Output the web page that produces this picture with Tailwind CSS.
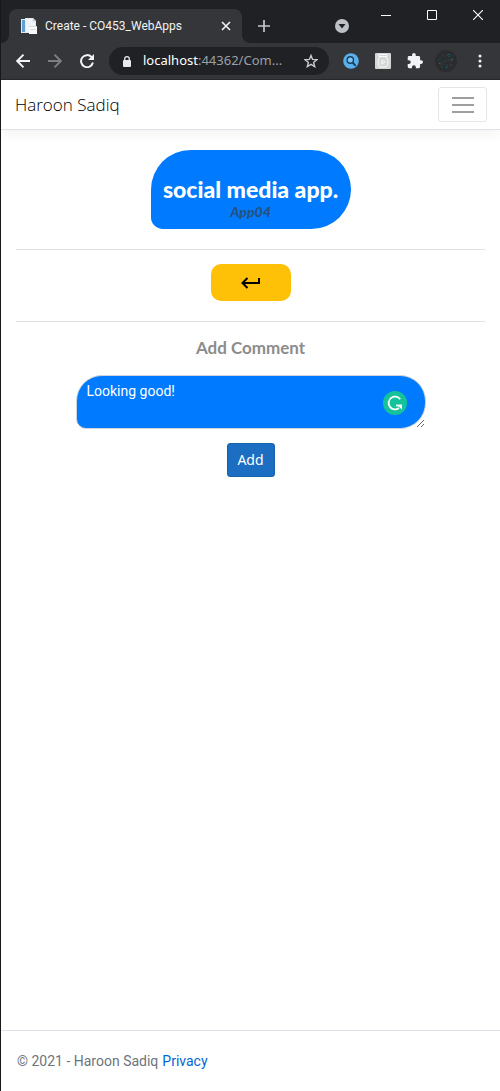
<!DOCTYPE html>
<html lang="en">
<head>
<meta charset="utf-8">
<meta name="viewport" content="width=device-width, initial-scale=1">
<title>Create - CO453_WebApps</title>
<script src="https://cdn.jsdelivr.net/npm/@tailwindcss/browser@4"></script>
</head>
<body class="flex min-h-screen flex-col border-l border-[#17181a] bg-white font-['Open_Sans','Noto_Sans',sans-serif] text-[#212529]">
<div class="bg-[#202124]">
  <div class="flex h-[43px] items-start">
    <div class="relative ml-2 mt-[9px] flex h-[34px] w-[233px] items-center rounded-t-lg bg-[#35363a] pl-3 pr-[11px]">
      <svg class="absolute -left-2 bottom-0 size-2" viewBox="0 0 8 8"><path fill="#35363a" d="M8 0v8H0a8 8 0 0 0 8-8Z"/></svg>
      <svg class="absolute -right-2 bottom-0 size-2" viewBox="0 0 8 8"><path fill="#35363a" d="M0 0v8h8a8 8 0 0 1-8-8Z"/></svg>
      <svg class="size-4 shrink-0" viewBox="0 0 16 16">
        <path fill="#dfe9f2" d="M0 1h9v14H0z"/><path fill="#5f9fd4" d="M1 2h3v12H1z"/>
        <path fill="#e4e8ed" d="M4 0h8l3 3v12H4z"/><path fill="#f1f3f6" d="M5 1h6v3h3v10H5z"/><path fill="#c5cbd3" d="M12 0v3h3z"/>
        <path fill="#fafafa" d="M8 8h8v8H8z"/><path stroke="#d3dae2" d="M8 8.500h8M9 11.500h6"/>
      </svg>
      <span class="ml-2 grow whitespace-nowrap font-['Roboto'] text-xs text-[#f1f3f4]">Create - CO453_WebApps</span>
      <button aria-label="Close tab"><svg class="size-[10px]" viewBox="0 0 10 10" fill="none" stroke="#f1f3f4" stroke-width="1.600"><path d="m1 1 8 8M9 1 1 9"/></svg></button>
    </div>
    <button class="ml-4 mt-5" aria-label="New tab"><svg class="size-3" viewBox="0 0 12 12" fill="none" stroke="#c4c7cb" stroke-width="1.700"><path d="M6 0v12M0 6h12"/></svg></button>
    <button class="ml-auto mt-[19px]" aria-label="Search tabs"><svg class="size-[14px]" viewBox="0 0 14 14"><circle cx="7" cy="7" r="7" fill="#bdc1c6"/><path fill="#202124" d="M3.500 5h7L7 9.500z"/></svg></button>
    <button class="ml-8 mt-[10px]" aria-label="Minimize"><svg class="size-[10px]" viewBox="0 0 10 10" stroke="#fff"><path d="M0 5.500h10"/></svg></button>
    <button class="ml-9 mt-[10px]" aria-label="Maximize"><svg class="size-[10px]" viewBox="0 0 10 10" fill="none" stroke="#fff"><path d="M.5.5h9v9h-9z"/></svg></button>
    <button class="ml-9 mr-[17px] mt-[10px]" aria-label="Close"><svg class="size-[10px]" viewBox="0 0 10 10" fill="none" stroke="#fff" stroke-width="1.100"><path d="m0 0 10 10M10 0 0 10"/></svg></button>
  </div>
  <div class="flex h-[37px] items-center border-b border-[#28292c] bg-[#35363a] pl-[15px] pr-[17px]">
    <button aria-label="Back"><svg class="size-[14px]" viewBox="0 0 14 14" fill="none" stroke="#f1f3f4" stroke-width="1.900"><path d="M14 7H1.500M7.500.7 1.200 7l6.300 6.300"/></svg></button>
    <button class="ml-[18px]" aria-label="Forward"><svg class="size-[14px]" viewBox="0 0 14 14" fill="none" stroke="#7c7e82" stroke-width="1.900"><path d="M0 7h12.500M6.500.7 12.800 7l-6.300 6.300"/></svg></button>
    <button class="ml-[18px]" aria-label="Reload"><svg class="size-[14px]" viewBox="0 0 14 14"><path fill="none" stroke="#f1f3f4" stroke-width="2" d="M11.600 3.200A6 6 0 1 0 12.900 8.500"/><path fill="#f1f3f4" d="M14 0v6H8z"/></svg></button>
    <div class="ml-[15px] flex h-7 w-[220px] items-center rounded-full bg-[#202124] pl-[14px] pr-[11px]">
      <svg class="h-[11px] w-2 shrink-0" viewBox="0 0 8 11"><rect y="4" width="8" height="7" rx="1" fill="#e8eaed"/><path fill="none" stroke="#e8eaed" stroke-width="1.300" d="M1.700 4.500V3a2.300 2.300 0 0 1 4.600 0v1.500"/></svg>
      <span class="ml-3 grow whitespace-nowrap font-['Noto_Sans'] text-[13px] text-[#9aa0a6]"><span class="text-white">localhost</span>:44362/Com...</span>
      <button aria-label="Bookmark"><svg class="size-[14px]" viewBox="0 0 14 14" fill="none" stroke="#c8cacd" stroke-width="1.400"><path d="m7 1.400 1.600 4 4.300.3-3.300 2.700 1.100 4.200L7 10.300l-3.700 2.300 1.100-4.200-3.300-2.700 4.300-.3z"/></svg></button>
    </div>
    <button class="ml-[14px]" aria-label="Search extension"><svg class="size-4" viewBox="0 0 16 16"><circle cx="8" cy="8" r="7.800" fill="#5ab0ec"/><circle cx="7.300" cy="7" r="3.200" fill="#7cc3f2" stroke="#17405f" stroke-width="1.400"/><path stroke="#17405f" stroke-width="1.800" d="m9.500 9.500 3.300 3.300"/></svg></button>
    <button class="ml-4" aria-label="Password extension"><svg class="size-4" viewBox="0 0 16 16" fill="none"><rect width="16" height="16" rx="1" fill="#d6d6d6"/><path stroke="#fafafa" d="M4 1.500h8v2H4zM5 4C2.500 6.500 2.500 11 4.500 14h7c2-3 2-7.500-.5-10"/><path stroke="#fafafa" d="M6.800 11.500v-4h1.400a1.300 1.300 0 0 1 0 2.600H7"/></svg></button>
    <button class="ml-4" aria-label="Extensions"><svg class="size-4" viewBox="1 1 22 22"><path fill="#f1f3f4" d="M20.500 11H19V7a2 2 0 0 0-2-2h-4V3.500a2.500 2.500 0 0 0-5 0V5H4a2 2 0 0 0-2 2v3.800h1.500a2.700 2.700 0 0 1 0 5.400H2V20a2 2 0 0 0 2 2h3.800v-1.500a2.700 2.700 0 0 1 5.400 0V22H17a2 2 0 0 0 2-2v-4h1.500a2.500 2.500 0 0 0 0-5Z"/></svg></button>
    <button class="ml-3" aria-label="Profile"><svg class="size-[22px]" viewBox="0 0 22 22" fill="none"><circle cx="11" cy="11" r="11" fill="#2b2c2d"/><path stroke="#1f4752" d="m3 10 3-2m2 3-3 3m4-1 2-3m0-6 3 3 2-2m-3 5 4 1m-6 3 2 3m-7-1 2 2m7-4 2 1"/><path stroke="#2a7185" d="m4 13 2 1m5 3 1 1m4-8 2-1m-5-5 1 1"/><path stroke="#3b3534" d="m7 4 2 3m3 3 3 1m-10 2 3 2m7 1 2-2"/></svg></button>
    <button class="ml-auto" aria-label="Menu"><svg class="h-[14px] w-[6px]" viewBox="0 0 6 14" fill="#f1f3f4"><circle cx="3" cy="2" r="1.500"/><circle cx="3" cy="7" r="1.500"/><circle cx="3" cy="12" r="1.500"/></svg></button>
  </div>
</div>

<header class="border-b border-[#dee2e6] shadow-[0_4px_12px_rgba(0,0,0,0.05)]">
  <nav class="flex h-[49px] items-center justify-between pl-[14px] pr-[13px]">
    <a href="#" class="text-[17px] font-light text-black">Haroon Sadiq</a>
    <button class="flex h-[35px] w-[49px] items-center justify-center rounded-[3px] border border-[#e5e5e5]" aria-label="Toggle navigation"><svg class="h-[18px] w-[22px]" viewBox="0 0 22 18" stroke="#7f7f7f" stroke-width="1.700"><path d="M0 2h22M0 9h22M0 16h22"/></svg></button>
  </nav>
</header>

<main class="flex grow flex-col items-center px-[15px] pt-5 font-['Lato',sans-serif]">
  <div class="flex h-[79px] w-[200px] flex-col items-center rounded-[40px] rounded-bl-xl bg-[#007bff] pt-6">
    <h1 class="whitespace-nowrap text-[23px] font-black leading-[30px] text-white">social media app.</h1>
    <p class="text-sm font-black italic leading-4 text-[#24527f]">App04</p>
  </div>
  <hr class="mt-5 w-full border-[#e2e2e2]">
  <a href="#" aria-label="Back to list" class="mt-[14px] flex h-[37px] w-20 items-center justify-center rounded-[10px] bg-[#ffc107]"><svg class="h-3 w-[19px]" viewBox="0 0 19 12" fill="none" stroke="#000" stroke-width="2"><path d="M18 1v5H1.500M6.500 1l-5 5 5 5"/></svg></a>
  <hr class="mt-5 w-full border-[#e2e2e2]">
  <form class="flex w-full flex-col items-center" onsubmit="return false">
    <label for="comment" class="mt-[14px] text-[17px] font-bold leading-6 text-[#8c8c8c]">Add Comment</label>
    <div class="relative mt-[15px] flex w-[350px] max-w-full">
      <textarea id="comment" spellcheck="false" class="h-[54px] w-full resize rounded-[26px] rounded-bl-[10px] border border-[#ced4da] bg-[#007bff] px-[10px] py-[5px] font-['Roboto'] text-sm leading-5 text-white">Looking good!</textarea>
      <svg class="absolute right-[19px] top-4 size-6" viewBox="0 0 24 24" fill="none"><circle cx="12" cy="12" r="12" fill="#15c39a"/><path stroke="#fff" stroke-width="1.800" d="M17.200 8.200A6.400 6.400 0 1 0 16 17"/><path stroke="#fff" stroke-width="1.800" d="M13 14.500h5.500"/><path fill="#fff" d="M19 13.600v5.200l-4.500-4.500z"/></svg>
    </div>
    <button class="mt-[14px] h-[34px] w-12 rounded-[3px] border border-[#1861ac] bg-[#1b6ec2] font-['Noto_Sans'] text-sm text-white">Add</button>
  </form>
</main>

<footer class="flex h-[61px] items-center gap-1 border-t border-[#dee2e6] px-4 font-['Roboto'] text-sm text-[#6c757d]">
  <span>© 2021 - Haroon Sadiq</span><a href="#" class="text-[#0366d6]">Privacy</a>
</footer>
</body>
</html>
